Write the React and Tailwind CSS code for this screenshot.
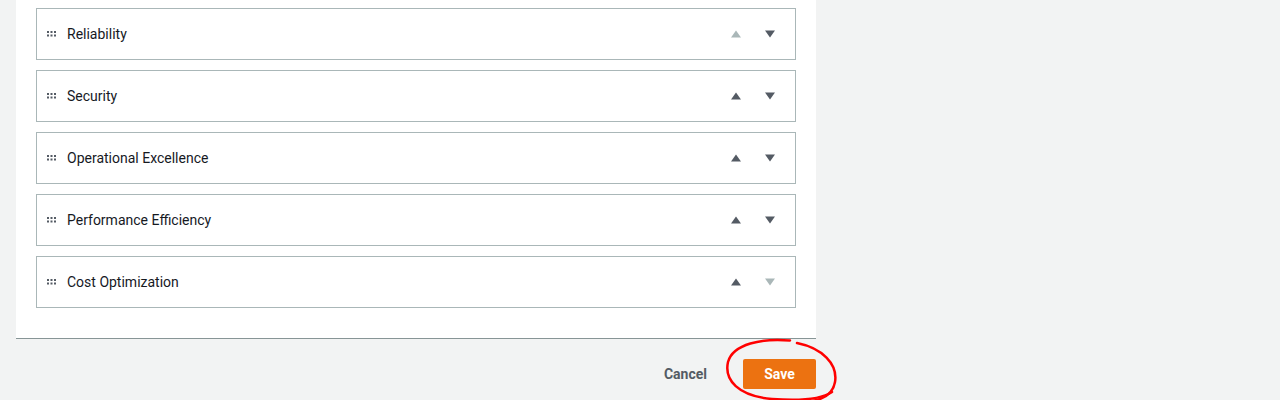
import React from "react";

const items = [
  { name: "Reliability", upDisabled: true, downDisabled: false },
  { name: "Security", upDisabled: false, downDisabled: false },
  { name: "Operational Excellence", upDisabled: false, downDisabled: false },
  { name: "Performance Efficiency", upDisabled: false, downDisabled: false },
  { name: "Cost Optimization", upDisabled: false, downDisabled: true },
];

function Handle() {
  return (
    <svg width="9" height="6" viewBox="0 0 9 6" className="shrink-0 mb-[1px]">
      {[0, 3.5, 7].map((x) =>
        [0, 3.5].map((y) => (
          <rect key={`${x}-${y}`} x={x} y={y} width="2" height="2" fill="#545b64" />
        ))
      )}
    </svg>
  );
}

function Arrow({ dir, disabled }) {
  const fill = disabled ? "#aab7b8" : "#545b64";
  return (
    <button className="w-[34px] h-[30px] flex items-center justify-center">
      <svg width="16" height="16" viewBox="0 0 16 16">
        {dir === "up" ? (
          <polygon points="3,11.5 8,4.5 13,11.5" fill={fill} />
        ) : (
          <polygon points="3,4.5 13,4.5 8,11.5" fill={fill} />
        )}
      </svg>
    </button>
  );
}

export default function App() {
  return (
    <div
      className="w-[1280px] h-[400px] bg-[#f2f3f3] relative overflow-hidden"
      style={{ fontFamily: "Roboto, 'Liberation Sans', sans-serif" }}
    >
      <div className="ml-4 w-[800px] bg-white border-b border-[#879596] px-5 pt-2 pb-[30px] flex flex-col gap-[10px]">
        {items.map((it) => (
          <div
            key={it.name}
            className="h-[52px] border border-[#aab7b8] flex items-center pl-[10px] pr-[8px]"
          >
            <Handle />
            <span className="ml-[11px] text-[14px] text-[#16191f]">{it.name}</span>
            <div className="ml-auto flex items-center">
              <Arrow dir="up" disabled={it.upDisabled} />
              <Arrow dir="down" disabled={it.downDisabled} />
            </div>
          </div>
        ))}
      </div>
      <div className="w-[816px] flex justify-end items-center gap-4 mt-5">
        <button className="h-[30px] px-5 text-[14px] font-bold text-[#545b64]">Cancel</button>
        <button className="h-[30px] w-[73px] rounded-[2px] bg-[#ec7211] text-[14px] font-bold text-white">
          Save
        </button>
      </div>
      <svg
        className="absolute left-0 top-0 pointer-events-none"
        width="1280"
        height="400"
        viewBox="0 0 1280 400"
      >
        <path
          d="M 790 340.5 C 762 338, 733 344, 728 362 C 724 380, 738 396, 772 399 C 800 401, 822 399, 832 392"
          fill="none"
          stroke="#ff0000"
          strokeWidth="2.5"
          strokeLinecap="round"
        />
        <path
          d="M 797 343 C 822 348, 838 364, 835 382 C 833 394, 824 399, 812 401"
          fill="none"
          stroke="#ff0000"
          strokeWidth="2.5"
          strokeLinecap="round"
        />
      </svg>
    </div>
  );
}
